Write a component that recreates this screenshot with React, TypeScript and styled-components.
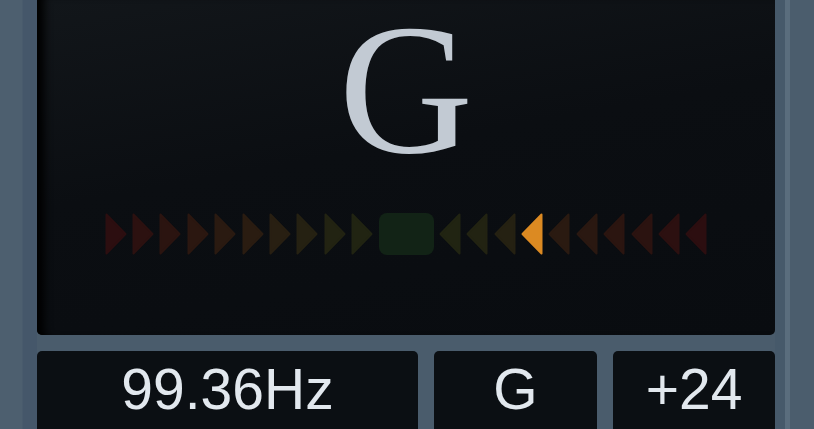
import styled, { createGlobalStyle } from 'styled-components';

const GlobalStyle = createGlobalStyle`
  html, body {
    margin: 0;
    padding: 0;
    background: #4a5c6c;
    overflow: hidden;
  }
`;

const Frame = styled.div`
  display: flex;
  flex-direction: row;
  width: 814px;
  height: 429px;
  overflow: hidden;
`;

const LeftRail = styled.div`
  width: 37px;
  flex-shrink: 0;
  background: linear-gradient(90deg, #4d5f6f 0, #4d5f6f 22px, #45576a 23px, #45576a 37px);
`;

const RightRail = styled.div`
  width: 39px;
  flex-shrink: 0;
  background: linear-gradient(
    90deg,
    #46596a 0,
    #46596a 10px,
    #5a6d7d 10px,
    #5a6d7d 15px,
    #4b5d6d 15px
  );
`;

const Column = styled.div`
  flex: 1;
  display: flex;
  flex-direction: column;
  gap: 16px;
`;

const Display = styled.div`
  height: 335px;
  flex-shrink: 0;
  border-radius: 0 0 5px 5px;
  background: linear-gradient(170deg, #12161a 0%, #0b0e12 45%, #090c10 100%);
  box-shadow: inset 13px 0 8px -6px #000;
  display: flex;
  flex-direction: column;
  align-items: center;
`;

const Note = styled.div`
  font-family: 'Liberation Serif', 'Times New Roman', serif;
  font-size: 186px;
  line-height: 178px;
  color: #c2cad3;
`;

const Meter = styled.div`
  margin-top: 35px;
  display: flex;
  align-items: center;
  gap: 5.4px;
  height: 42px;
`;

const Center = styled.div`
  width: 55px;
  height: 42px;
  border-radius: 8px;
  background: #122316;
`;

const Readouts = styled.div`
  display: grid;
  grid-template-columns: 381px 163px 162px;
  gap: 16px;
  flex: 1;
`;

const Readout = styled.div`
  background: #0b0f13;
  border-radius: 5px 5px 0 0;
  display: flex;
  justify-content: center;
  padding-top: 10px;
  font-family: 'Liberation Sans', Arial, sans-serif;
  font-size: 57px;
  line-height: 57px;
  color: #e2e8ee;
`;

const Arrow = ({ color, dir }: { color: string; dir: 'left' | 'right' }) => (
  <svg width="22" height="42" viewBox="0 0 22 42">
    <path
      d={dir === 'right' ? 'M1.5 1.5 L20.5 21 L1.5 40.5 Z' : 'M20.5 1.5 L1.5 21 L20.5 40.5 Z'}
      fill={color}
      stroke={color}
      strokeWidth="2"
      strokeLinejoin="round"
    />
  </svg>
);

const leftColors = [
  '#2c0e10',
  '#2c1110',
  '#2b1410',
  '#2b1710',
  '#2a1a11',
  '#2a1c11',
  '#281f12',
  '#252112',
  '#222312',
  '#212412',
];

const rightColors = [
  '#212412',
  '#222312',
  '#252112',
  '#dc8a22',
  '#2a1a11',
  '#2a1811',
  '#2b1510',
  '#2b1310',
  '#2c1010',
  '#2c0e10',
];

export default function App() {
  return (
    <>
      <GlobalStyle />
      <Frame>
        <LeftRail />
        <Column>
          <Display>
            <Note>G</Note>
            <Meter>
              {leftColors.map((c, i) => (
                <Arrow key={'l' + i} color={c} dir="right" />
              ))}
              <Center />
              {rightColors.map((c, i) => (
                <Arrow key={'r' + i} color={c} dir="left" />
              ))}
            </Meter>
          </Display>
          <Readouts>
            <Readout>99.36Hz</Readout>
            <Readout>G</Readout>
            <Readout>+24</Readout>
          </Readouts>
        </Column>
        <RightRail />
      </Frame>
    </>
  );
}
